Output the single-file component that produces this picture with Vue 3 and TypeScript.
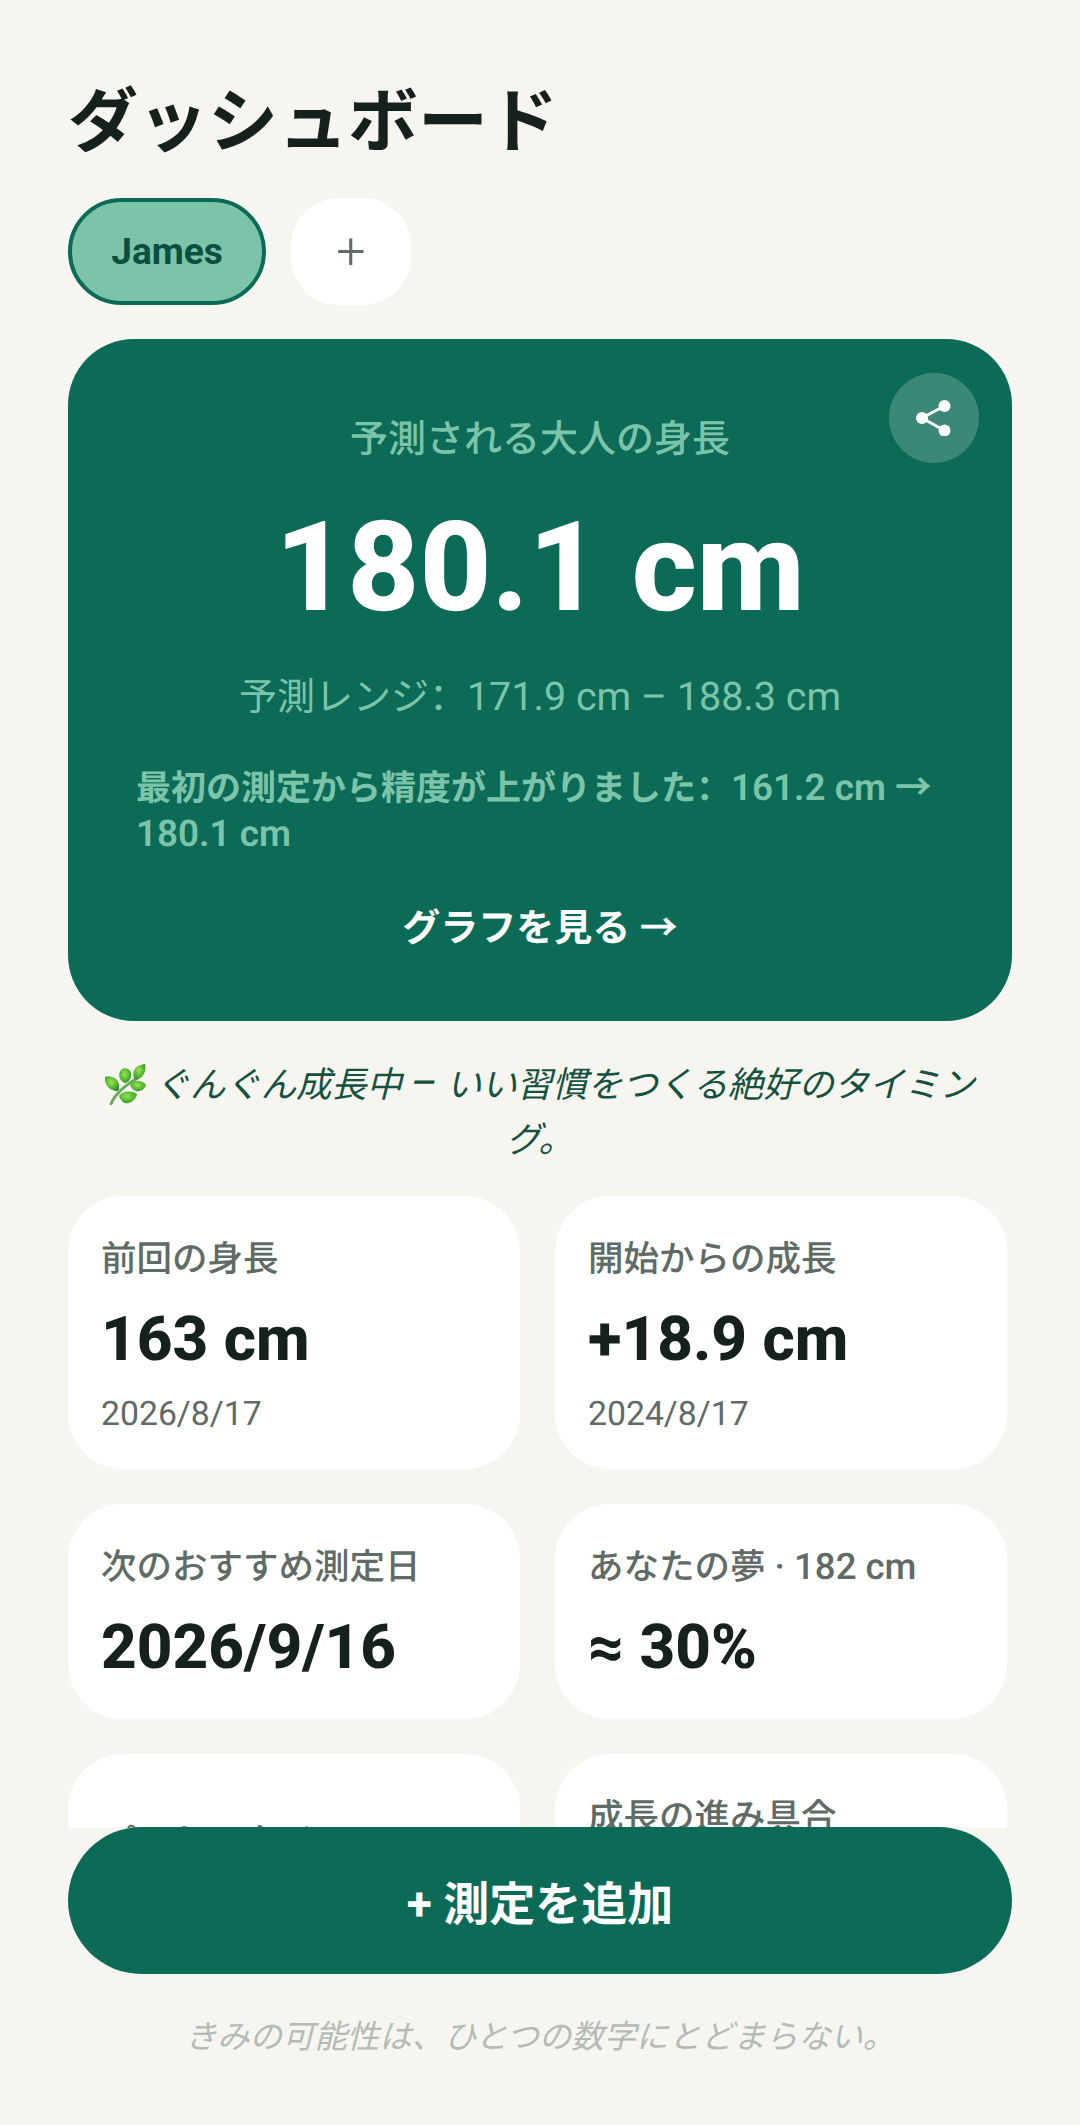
<script setup lang="ts">
interface Stat {
  label: string
  labelNum?: string
  value?: string
  sub?: string
  low?: boolean
}

// 統計カード
const stats: Stat[] = [
  { label: '前回の身長', value: '163 cm', sub: '2026/8/17' },
  { label: '開始からの成長', value: '+18.9 cm', sub: '2024/8/17' },
  { label: '次のおすすめ測定日', value: '2026/9/16' },
  { label: 'あなたの夢', labelNum: ' · 182 cm', value: '≈ 30%' },
  { label: 'パーセンタイル', low: true },
  { label: '成長の進み具合' }
]
</script>

<template>
  <div class="page">
    <main class="scroll">
      <h1 class="title">ダッシュボード</h1>

      <div class="chips">
        <button class="chip chip-active" type="button">James</button>
        <button class="chip-add" type="button">+</button>
      </div>

      <section class="hero">
        <button class="share" type="button" aria-label="share">
          <svg width="36" height="36" viewBox="0 0 36 36" fill="none">
            <path d="M28.5 6 L6 18 L28.5 30.5" stroke="#fff" stroke-width="3" />
            <circle cx="28.5" cy="6" r="6" fill="#fff" />
            <circle cx="6" cy="18" r="6" fill="#fff" />
            <circle cx="28.5" cy="30.5" r="6" fill="#fff" />
          </svg>
        </button>
        <p class="hero-label">予測される大人の身長</p>
        <p class="hero-value">180.1 cm</p>
        <p class="hero-range">予測レンジ<span class="colon">：</span><span class="num">171.9 cm – 188.3 cm</span></p>
        <p class="hero-note">最初の測定から精度が上がりました<span class="colon">：</span><span class="num">161.2 cm →</span> <span class="num">180.1 cm</span></p>
        <p class="hero-link">グラフを見る →</p>
      </section>

      <p class="tagline">
        <svg class="herb" width="41" height="41" viewBox="0 0 41 41">
          <defs>
            <radialGradient id="leaf" cx="0.45" cy="0.4" r="0.65">
              <stop offset="0" stop-color="#9be05a" />
              <stop offset="0.65" stop-color="#4fb52e" />
              <stop offset="1" stop-color="#2b8a20" />
            </radialGradient>
          </defs>
          <path d="M6 40 C10 30 22 20 34 13" stroke="#6aa85a" stroke-width="2.8" fill="none" stroke-linecap="round" />
          <path d="M13 27 C5 27 -1 21 0 13 C3 11 14 13 14 22 C14 24 14 26 13 27 Z" fill="url(#leaf)" />
          <path d="M20 19 C14 17 12 9 17 5 C20 3 25 5 26 9 C27 14 24 18 20 19 Z" fill="url(#leaf)" />
          <path d="M30 15 C27 11 28 5 33 2 C35 1 39 0 40 0 C41 5 40 11 35 14 C33 15 31 16 30 15 Z" fill="url(#leaf)" />
          <path d="M25 21 C28 16 36 15 41 21 C39 26 35 28 31 27 C28 26 26 24 25 21 Z" fill="url(#leaf)" />
          <path d="M14 32 C17 27 26 26 32 30 C31 35 26 40 20 39 C17 38 15 35 14 32 Z" fill="url(#leaf)" />
        </svg>
        ぐんぐん成長中 <span class="dash">–</span> いい習慣をつくる絶好のタイミング。
      </p>

      <div class="grid">
        <div v-for="s in stats" :key="s.label" class="stat" :class="{ 'stat-low': s.low }">
          <p class="stat-label">{{ s.label }}<span v-if="s.labelNum" class="label-num">{{ s.labelNum }}</span></p>
          <p v-if="s.value" class="stat-value">{{ s.value }}</p>
          <p v-if="s.sub" class="stat-sub">{{ s.sub }}</p>
        </div>
      </div>
    </main>

    <footer class="footer">
      <button class="add-button" type="button">+ 測定を追加</button>
      <p class="motto">きみの可能性は、ひとつの数字にとどまらない。</p>
    </footer>
  </div>
</template>

<style>
html,
body {
  background: #f6f5f0;
}
</style>

<style scoped>
.page {
  display: flex;
  flex-direction: column;
  height: 2125px;
  overflow: hidden;
  background: #f6f5f0;
  color: #16211e;
  font-family: Roboto, "Noto Sans CJK JP", sans-serif;
  text-rendering: geometricPrecision;
}

p,
h1 {
  margin: 0;
}

button {
  font-family: inherit;
  border: none;
  cursor: pointer;
}

.scroll {
  flex: 0 0 1828px;
  overflow: hidden;
  padding: 72px 68px 0;
  box-sizing: border-box;
}

.title {
  font-size: 70px;
  line-height: 102px;
  font-weight: 700;
  color: #16211e;
}

.chips {
  display: flex;
  gap: 25px;
  margin-top: 24px;
}

.chip {
  width: 198px;
  height: 107px;
  border-radius: 54px;
  box-sizing: border-box;
  font-size: 37px;
  font-weight: 700;
}

.chip-active {
  background: #7cc4a9;
  border: 4px solid #0b6b57;
  color: #0a4f3f;
}

.chip-add {
  width: 120px;
  height: 107px;
  border-radius: 48px;
  background: #fff;
  color: #5f6b67;
  font-size: 52px;
  font-weight: 350;
  padding: 0;
}

.hero {
  position: relative;
  margin-top: 34px;
  padding: 70px 68px 66px;
  height: 682px;
  box-sizing: border-box;
  border-radius: 66px;
  background: #0b6b57;
  text-align: center;
  color: #7cc4a9;
}

.share {
  position: absolute;
  top: 34px;
  right: 33px;
  width: 90px;
  height: 90px;
  display: flex;
  align-items: center;
  justify-content: center;
  border-radius: 50%;
  background: rgba(255, 255, 255, 0.2);
  padding: 0;
}

.hero-label {
  font-size: 38px;
  line-height: 62px;
  font-weight: 500;
}

.hero-value {
  margin-top: 26px;
  font-size: 125px;
  line-height: 142px;
  font-weight: 800;
  color: #fff;
}

.hero-range {
  margin-top: 28px;
  font-size: 38px;
  line-height: 60px;
  font-weight: 400;
}

.colon {
  font-family: "Noto Sans CJK SC", sans-serif;
  line-height: 0;
}

.hero-range .num {
  font-size: 39.5px;
}

.hero-note {
  margin-top: 37px;
  font-size: 35px;
  line-height: 45px;
  font-weight: 600;
  text-align: left;
}

.hero-note .num {
  font-size: 36.8px;
}

.hero-link {
  margin-top: 43px;
  font-size: 38px;
  line-height: 58px;
  font-weight: 600;
  color: #fff;
}

.tagline {
  margin-top: 37px;
  padding: 0 22px;
  font-size: 35.3px;
  line-height: 55px;
  font-style: italic;
  text-align: center;
  color: #14523f;
}

.dash {
  font-size: 42px;
  line-height: 1;
}

.herb {
  vertical-align: -8px;
}

.grid {
  display: grid;
  grid-template-columns: repeat(2, 452px);
  gap: 35px;
  margin-top: 28px;
}

.stat {
  padding: 38px 33px 33px;
  border-radius: 55px;
  background: #fff;
}

.stat-low {
  padding-top: 63px;
}

.stat-label {
  font-size: 35.5px;
  line-height: 50px;
  font-weight: 500;
  color: #5f6b67;
}

.label-num {
  font-size: 36.6px;
}

.stat-value {
  margin-top: 18px;
  font-size: 62px;
  line-height: 76px;
  font-weight: 800;
  color: #16211e;
}

.stat-sub {
  margin-top: 16px;
  font-size: 33.75px;
  line-height: 42px;
  font-weight: 400;
  color: #5f6b67;
}

.footer {
  margin-top: -1px;
  position: relative;
  padding: 0 68px;
}

.add-button {
  display: block;
  width: 100%;
  height: 147px;
  padding: 0 0 2px;
  border-radius: 74px;
  background: #0b6b57;
  color: #fff;
  font-size: 46px;
  font-weight: 700;
}

.motto {
  margin-top: 40px;
  font-size: 32.4px;
  line-height: 46px;
  font-style: italic;
  text-align: center;
  color: #b4bbb6;
}
</style>
